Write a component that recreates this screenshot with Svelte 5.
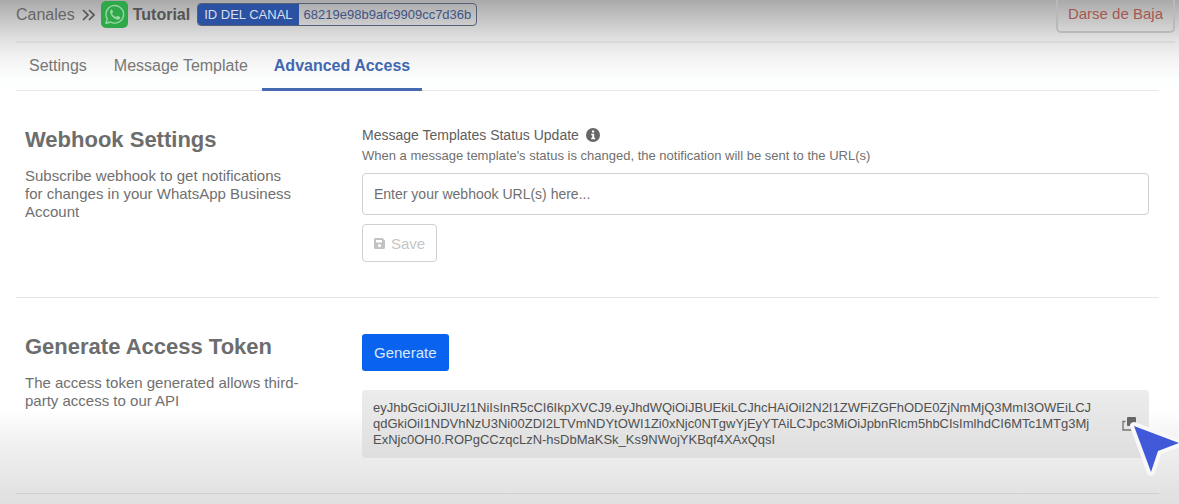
<script>
  const tabs = ['Settings', 'Message Template', 'Advanced Access'];
  let active = $state('Advanced Access');
  let url = $state('');
  const token = [
    'eyJhbGciOiJIUzI1NiIsInR5cCI6IkpXVCJ9.eyJhdWQiOiJBUEkiLCJhcHAiOiI2N2I1ZWFiZGFhODE0ZjNmMjQ3MmI3OWEiLCJ',
    'qdGkiOiI1NDVhNzU3Ni00ZDI2LTVmNDYtOWI1Zi0xNjc0NTgwYjEyYTAiLCJpc3MiOiJpbnRlcm5hbCIsImlhdCI6MTc1MTg3Mj',
    'ExNjc0OH0.ROPgCCzqcLzN-hsDbMaKSk_Ks9NWojYKBqf4XAxQqsI'
  ];
</script>

<div class="page">
  <header>
    <nav class="crumbs">
      <a href="#canales">Canales</a>
      <svg class="chevrons" width="14" height="12" viewBox="0 0 14 12" fill="none" stroke="#555" stroke-width="1.7"><path d="M1 1l5 5-5 5M7 1l5 5-5 5" /></svg>
      <svg class="logo" width="27" height="27" viewBox="0 0 27 27">
        <rect width="27" height="27" rx="5" fill="#2fa84a" />
        <path d="M5 22.2l1.2-4.5a8.8 8.8 0 1 1 3.4 3.3z" fill="none" stroke="#9bd6a5" stroke-width="1.4" stroke-linejoin="round" />
        <path d="M10.5 8.6c-.8.3-1.5 1.3-1.3 2.6.4 3.4 3.8 6.9 7.3 7.4 1.4.2 2.5-.6 2.7-1.5.2-.8.1-1-.2-1.2l-2-1c-.4-.2-.7-.1-1 .3l-.8.9c-1.900-.6-3.400-2-4.200-3.600l.8-1.100c.2-.3.2-.5.1-.8l-.8-1.900c-.1-.2-.3-.2-.6-.1z" fill="#9bd6a5" />
      </svg>
      <strong>Tutorial</strong>
      <span class="badge"><span class="key">ID DEL CANAL</span><span class="value">68219e98b9afc9909cc7d36b</span></span>
    </nav>
    <button class="unsubscribe" type="button">Darse de Baja</button>
  </header>

  <main>
    <div class="tabs" role="tablist">
      {#each tabs as tab}
        <button type="button" role="tab" class:active={tab === active} aria-selected={tab === active} onclick={() => (active = tab)}>{tab}</button>
      {/each}
    </div>

    <section class="webhook">
      <div class="intro">
        <h2>Webhook Settings</h2>
        <p>Subscribe webhook to get notifications for changes in your WhatsApp Business Account</p>
      </div>
      <div class="body">
        <label for="webhook-url">Message Templates Status Update
          <svg width="14" height="14" viewBox="0 0 14 14"><circle cx="7" cy="7" r="7" fill="#666" /><path d="M6 2.500h2.200v2H6zM5.200 5.700h3v4h1v1.500h-4V9.700h1V7.200h-1z" fill="#fff" /></svg>
        </label>
        <p class="hint">When a message template's status is changed, the notification will be sent to the URL(s)</p>
        <input id="webhook-url" type="text" placeholder="Enter your webhook URL(s) here..." bind:value={url} />
        <button class="save" type="button" disabled>
          <svg width="11" height="11" viewBox="0 0 11 11" fill="#c2c2c2" fill-rule="evenodd"><path d="M1 0h7.500L11 2.500V10l-1 1H1l-1-1V1zM2 2v2.500h6V2zM5.500 6a1.600 1.600 0 1 0 0 3.200a1.600 1.600 0 0 0 0-3.200z" /></svg>
          Save
        </button>
      </div>
    </section>

    <section class="access">
      <div class="intro">
        <h2>Generate Access Token</h2>
        <p>The access token generated allows third-party access to our API</p>
      </div>
      <div class="body">
        <button class="generate" type="button">Generate</button>
        <div class="token">
          <code>{#each token as line}<span>{line}</span>{/each}</code>
          <button class="copy" type="button" aria-label="Copy">
            <svg width="15" height="14" viewBox="0 0 15 14"><rect x="5" width="9" height="9" rx="1" fill="#666" /><path d="M3.500 4.500H1v8.500h8.500v-2.500" fill="none" stroke="#777" stroke-width="1.400" /></svg>
            <svg class="pointer" width="56" height="60" viewBox="0 0 56 60"><path d="M8 8l45 17-21 8-7 21z" fill="#f8f8f8" stroke="#f8f8f8" stroke-width="8" stroke-linejoin="round" /><path d="M8 8l45 17-21 8-7 21z" fill="#4059d8" /></svg>
          </button>
        </div>
      </div>
    </section>
  </main>
</div>

<style>
  :global(body) { background: #fff; }
  .page {
    box-sizing: border-box;
    min-height: 100vh;
    padding: 0 4px 0 16px;
    overflow: hidden;
    background:
      linear-gradient(#a9a9a9 0, #c3c3c3 18px, #e2e2e2 40px, #f4f4f4 60px, #fdfefe 80px, transparent 92px) top / 100% 92px no-repeat,
      linear-gradient(transparent 0, #f0f0f0 36px, #dfdfdf 94px) bottom / 100% 94px no-repeat,
      #fff;
    color: #6a6a6a;
    font-family: "Liberation Sans", Arial, sans-serif;
    font-size: 15px;
  }
  button, input { font: inherit; }
  button { cursor: pointer; }
  h2, p { margin: 0; }
  header {
    display: flex;
    justify-content: space-between;
    align-items: flex-start;
    height: 41px;
    border-bottom: 2px solid #d8d8d8;
  }
  .crumbs { display: flex; align-items: center; height: 29px; font-size: 16px; color: #575757; }
  .crumbs a { color: #666; text-decoration: none; }
  .chevrons { margin: 0 5px 0 7px; }
  .logo { margin-right: 5px; }
  .crumbs strong { color: #555; }
  .badge {
    display: flex;
    margin-left: 7px;
    border: 1px solid #555f78;
    border-radius: 4px;
    overflow: hidden;
    font-size: 13px;
    line-height: 21px;
  }
  .key { padding: 0 6px; background: #2b51a3; color: #d8dfed; }
  .value { padding: 0 5px; color: #405385; }
  .unsubscribe {
    height: 33px;
    padding: 0 10px 5px;
    border: 2px solid #b9b9b9;
    border-top: 0;
    border-radius: 0 0 5px 5px;
    background: transparent;
    color: #a65850;
  }
  main { margin-right: 16px; }
  .tabs { display: flex; gap: 1px; border-bottom: 1px solid #e8e8e8; }
  .tabs button {
    height: 48px;
    margin-bottom: -1px;
    padding: 0 13px;
    border: 0;
    border-bottom: 3px solid transparent;
    background: none;
    color: #777;
    font-size: 16px;
  }
  .tabs .active { padding: 0 12px; border-color: #456ab3; color: #4167b0; font-weight: 700; }
  section {
    display: grid;
    grid-template-columns: 277px 1fr;
    column-gap: 60px;
    padding: 36px 10px 35px 9px;
    border-bottom: 1px solid #e6e6e6;
  }
  .access { border-color: #d0d0d0; }
  h2 { margin-bottom: 14px; color: #6d6d6d; font-size: 22px; line-height: 26px; }
  .intro p { line-height: 18px; color: #707070; }
  .body { min-width: 0; }
  label { display: flex; align-items: center; gap: 7px; margin-bottom: 2px; font-size: 14px; line-height: 16px; color: #5e5e5e; }
  .hint { margin-bottom: 6px; font-size: 13px; line-height: 22px; color: #707070; }
  input {
    display: block;
    box-sizing: border-box;
    width: 100%;
    height: 42px;
    padding: 0 11px;
    border: 1px solid #d0d0d0;
    border-radius: 4px;
    background: #fff;
    color: #666;
    font-size: 14px;
  }
  input::placeholder { color: #707070; opacity: 1; }
  .save {
    display: flex;
    align-items: center;
    gap: 6px;
    height: 38px;
    margin-top: 9px;
    padding: 0 11px;
    border: 1px solid #d0d0d0;
    border-radius: 4px;
    background: #fff;
    color: #c6c6c6;
  }
  .generate { height: 37px; padding: 0 12px; border: 0; border-radius: 3px; background: #0a63ee; color: #d9e8ff; }
  .token {
    display: flex;
    align-items: center;
    justify-content: space-between;
    margin-top: 19px;
    padding: 10px 12px 10px 11px;
    border-radius: 4px;
    background: linear-gradient(#ececec, #dedede);
  }
  code { font-family: inherit; font-size: 13px; line-height: 16px; color: #505050; }
  code span { display: block; }
  .copy { position: relative; display: flex; padding: 0; border: 0; background: none; }
  .pointer { position: absolute; left: 4px; top: 1px; pointer-events: none; }
</style>
